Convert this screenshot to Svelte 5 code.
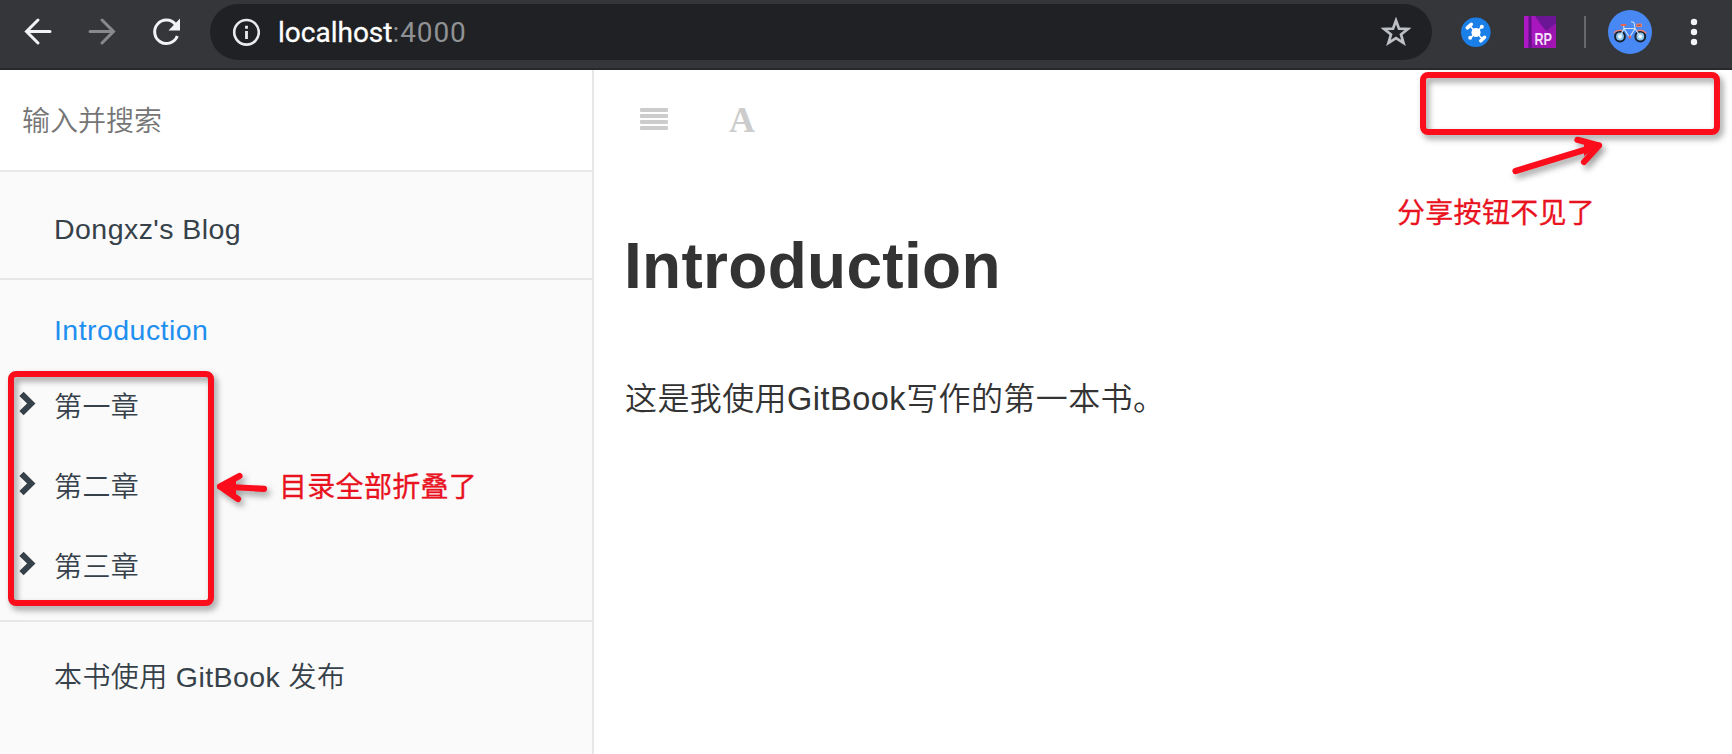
<script>
  const chapters = ['第一章', '第二章', '第三章'];
</script>

<div class="window">
  <header class="chrome">
    <svg class="nav" width="210" height="68" viewBox="0 0 210 68" fill="none">
      <path d="M50 31.500H27M38 20L26.500 31.500L38 43" stroke="#f1f3f4" stroke-width="3" stroke-linecap="round" />
      <path d="M90 31.500H113M102 20L113.500 31.500L102 43" stroke="#87898c" stroke-width="3" stroke-linecap="round" />
      <path d="M175.500 24.500A11.700 11.700 0 1 0 177.300 36" stroke="#f1f3f4" stroke-width="3" />
      <path d="M180 18.500V30.500H168.500Z" fill="#f1f3f4" />
    </svg>
    <div class="omnibox">
      <svg width="28" height="28" viewBox="0 0 28 28" fill="none">
        <circle cx="14.500" cy="14.300" r="12.300" stroke="#e8eaed" stroke-width="2.600" />
        <path d="M14.500 7.800v3M14.500 13v8" stroke="#e8eaed" stroke-width="2.800" />
      </svg>
      <span class="url">localhost<span class="port">:4000</span></span>
      <svg class="star" width="30" height="30" viewBox="0 0 30 30" fill="none">
        <path d="M15 3.500L18 11.700L27 12L20 17.500L22.500 26L15 21.200L7.500 26L10 17.500L3 12L12 11.700Z" stroke="#bdc1c6" stroke-width="2.700" />
      </svg>
    </div>
    <svg class="tools" width="300" height="68" viewBox="1432 0 300 68" fill="none">
      <defs>
        <linearGradient id="purple" x1="0" y1="0" x2="1" y2="1">
          <stop offset="0" stop-color="#b51bc8" />
          <stop offset=".5" stop-color="#8d16a8" />
          <stop offset="1" stop-color="#a814b5" />
        </linearGradient>
      </defs>
      <circle cx="1475.800" cy="32.200" r="14.800" fill="#1b7fe9" />
      <g stroke="#fff" stroke-linecap="round">
        <path d="M1470 26L1482.500 39M1481.500 27L1470.500 38" stroke-width="1.600" />
        <path d="M1467.300 27.800L1471.300 24.300M1480.800 40.800L1484.500 37.300" stroke-width="3.600" />
        <path d="M1481.800 26.800h.01M1470.200 37.800h.01" stroke-width="4" />
      </g>
      <circle cx="1476" cy="32.500" r="4.600" fill="#fff" />
      <path d="M1524 16h32v32h-32z" fill="url(#purple)" />
      <path d="M1524 16h4.500v32h-4.500z" fill="#ad1ac5" />
      <path d="M1528.500 16h3v32h-3z" fill="#651088" />
      <path d="M1535 16H1556V23L1546 31Z" fill="#6b1694" />
      <path d="M1532 16L1547 32L1532 45Z" fill="#a918bf" />
      <text x="1534.500" y="44.800" class="rp" textLength="17.500" lengthAdjust="spacingAndGlyphs">RP</text>
      <path d="M1584 16h2v32h-2z" fill="#66686c" />
      <circle cx="1630" cy="32" r="22" fill="#4788f4" />
      <g stroke-linejoin="round" stroke-linecap="round">
        <g stroke="#17212d" stroke-width="2">
          <circle cx="1620" cy="36.500" r="4.900" fill="#8cc6ee" />
          <circle cx="1640.300" cy="36.500" r="4.900" fill="#8cc6ee" />
        </g>
        <path d="M1614 32.500Q1617 29.800 1622 30.500M1637 31Q1642 28.800 1646 33" stroke="#e97c6e" stroke-width="1.300" />
        <path d="M1620 36.500L1624 28.500H1635L1629.500 37.500M1624 28.500L1629.500 37.500M1635 28.500L1640.300 36.500M1635 28.500L1634 22.500L1631.500 21.800M1624 28.500L1623.500 25.500" stroke="#cfe2f4" stroke-width="1.100" />
        <path d="M1621.500 25h4" stroke="#e96552" stroke-width="2" />
        <path d="M1637 24h4.500v2.500h-4.500z" fill="#aa5b50" stroke="#e9846d" />
        <circle cx="1629.800" cy="37" r="1.500" fill="#e96552" />
        <circle cx="1620" cy="36.500" r="1.900" fill="#f2f7fb" />
        <circle cx="1640.300" cy="36.500" r="1.900" fill="#f2f7fb" />
      </g>
      <g fill="#f1f3f4">
        <circle cx="1694" cy="22" r="3.200" /><circle cx="1694" cy="32" r="3.200" /><circle cx="1694" cy="42" r="3.200" />
      </g>
    </svg>
  </header>

  <div class="book">
    <aside>
      <div class="search">输入并搜索</div>
      <a class="title"><span class="latin">Dongxz's Blog</span></a>
      <nav>
        <a class="active"><span class="latin">Introduction</span></a>
        {#each chapters as chapter}
          <a class="chapter">
            <svg width="18" height="28" viewBox="0 0 18 28" fill="none">
              <path d="M3.500 3.800L13.200 13.500L3.500 23.200" stroke="#364149" stroke-width="6" />
            </svg>
            <span>{chapter}</span>
          </a>
        {/each}
      </nav>
      <a class="credit">本书使用 <span class="latin">GitBook</span> 发布</a>
    </aside>

    <main>
      <div class="toolbar">
        <svg width="28" height="22" viewBox="0 0 28 22" fill="#ccc">
          <rect width="28" height="4" rx="1" /><rect y="6" width="28" height="4" rx="1" />
          <rect y="12" width="28" height="4" rx="1" /><rect y="18" width="28" height="4" rx="1" />
        </svg>
        <span class="fontbtn">A</span>
      </div>
      <article>
        <h1>Introduction</h1>
        <p>这是我使用<span class="gb">GitBook</span>写作的第一本书。</p>
      </article>
    </main>
  </div>

  <div class="mark contents"></div>
  <div class="mark share"></div>
  <svg class="arrows" width="1732" height="754" viewBox="0 0 1732 754" fill="none" stroke="#fc0d1b" stroke-width="6.200" stroke-linecap="round" stroke-linejoin="round">
    <path d="M264 488.800L220 486.500M239.500 476L220 486.500L238 499" />
    <path d="M1515.500 171L1599 145.500M1577.500 139.800L1599 145.500L1584 162" />
    <path d="M220 486.500L236 479.500V494.500ZM1599 145.500L1584 144V156Z" fill="#fc0d1b" stroke="none" />
  </svg>
  <span class="note folded">目录全部折叠了</span>
  <span class="note missing">分享按钮不见了</span>
</div>

<style>
  :global(body) { margin: 0; background: #fff; overflow: hidden; }
  .window {
    position: relative; width: 1732px; height: 754px; overflow: hidden;
    display: flex; flex-direction: column; background: #fff;
    font-family: "Liberation Sans", "Noto Sans CJK SC", sans-serif;
  }
  .chrome {
    box-sizing: border-box; height: 70px; flex: none; display: flex;
    background: #35363a; border-bottom: 2px solid #28292c;
  }
  .nav, .tools { flex: none; display: block; }
  .omnibox {
    box-sizing: border-box; flex: 1; height: 56px; margin-top: 4px; border-radius: 28px;
    padding: 0 21px 0 22px; background: #202124; display: flex; align-items: center;
  }
  .url {
    margin-left: 18px; flex: 1; font: 28px/56px Roboto, sans-serif; color: #fff;
    letter-spacing: 0; -webkit-text-stroke: .3px; padding-top: 1px;
  }
  .port { color: #8f9194; -webkit-text-stroke: 0; letter-spacing: .9px; }
  .rp { font: bold 17px "Liberation Sans", sans-serif; fill: #f6dcf8; }

  .book { flex: 1; display: flex; }
  aside {
    box-sizing: border-box; width: 594px; flex: none; background: #fafafa;
    border-right: 2px solid #e7e7e7; display: flex; flex-direction: column;
    font-size: 28px; letter-spacing: .4px; color: #364149; font-weight: 350;
  }
  .latin { font-size: 28.5px; letter-spacing: .45px; }
  .search {
    box-sizing: border-box; height: 102px; padding-left: 22px; line-height: 104px;
    background: #fff; color: #757575; border-bottom: 2px solid #e9e9e9; letter-spacing: 0;
  }
  .title {
    box-sizing: border-box; height: 108px; padding-left: 54px; line-height: 114px;
    border-bottom: 2px solid #e7e7e7;
  }
  nav { box-sizing: border-box; height: 342px; padding-top: 11px; border-bottom: 2px solid #e7e7e7; }
  nav a { display: flex; align-items: center; height: 80px; padding-left: 54px; line-height: 80px; }
  nav .active { color: #1f8fef; height: 77px; line-height: 80px; }
  .chapter { padding-left: 18px; }
  .chapter svg { flex: none; margin: -9px 18px 0 0; }
  .credit { padding-left: 54px; line-height: 110px; }

  main { flex: 1; padding-left: 30px; color: #333; }
  .toolbar { height: 100px; display: flex; align-items: center; padding-left: 16px; }
  .toolbar svg { margin-top: -2px; }
  .fontbtn { margin: -1px 0 0 61px; font: bold 36px "Liberation Serif", serif; color: #ccc; }
  h1 { margin: 56px 0 0; font-size: 64px; line-height: 80px; letter-spacing: .3px; }
  p { margin: 65px 0 0 1px; font-size: 32px; line-height: 56px; letter-spacing: .4px; font-weight: 350; }
  .gb { font-size: 32.500px; letter-spacing: .5px; }

  .mark {
    position: absolute; box-sizing: border-box; border: 6px solid #fc0d1b; border-radius: 8px;
    filter: drop-shadow(3px 4px 3px rgba(0, 0, 0, .38));
  }
  .contents { left: 8px; top: 371px; width: 206px; height: 235px; }
  .share { left: 1420px; top: 72px; width: 300px; height: 63px; }
  .arrows { position: absolute; left: 0; top: 0; filter: drop-shadow(3px 4px 3px rgba(0, 0, 0, .38)); }
  .note {
    position: absolute; font: 400 28px/40px "Noto Sans CJK SC", sans-serif; color: #e9121f;
    white-space: nowrap; letter-spacing: .3px; -webkit-text-stroke: .3px;
  }
  .folded { left: 279px; top: 465px; }
  .missing { left: 1397px; top: 191px; }
</style>
